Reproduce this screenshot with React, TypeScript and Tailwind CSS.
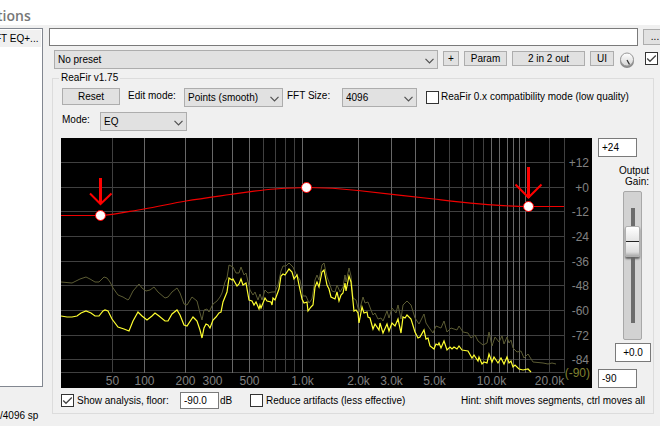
import { useId, type ReactNode } from "react";

const FREQS = [
  { x: 51.5, label: "50" },
  { x: 83.5, label: "100", major: true },
  { x: 124.5, label: "200", major: true },
  { x: 151.5, label: "300", major: true },
  { x: 171.5, major: true },
  { x: 188.5, label: "500", major: true },
  { x: 202.5 },
  { x: 214.5 },
  { x: 224.5 },
  { x: 233.5 },
  { x: 241.5, label: "1.0k", major: true },
  { x: 297.5, label: "2.0k", major: true },
  { x: 330.5, label: "3.0k", major: true },
  { x: 354.5, major: true },
  { x: 373.5, label: "5.0k", major: true },
  { x: 388.5 },
  { x: 401.5 },
  { x: 412.5 },
  { x: 422.5 },
  { x: 430.5, label: "10.0k", major: true },
  { x: 438.5, major: true },
  { x: 446.5, major: true },
  { x: 452.5, major: true },
  { x: 458.5, major: true },
  { x: 464.5, major: true },
  { x: 488.5, label: "20.0k" },
  { x: 503.5 },
];

const LEVELS = [
  { y: 24.5, label: "+12" },
  { y: 49.5, label: "+0" },
  { y: 73.5, label: "-12" },
  { y: 98.5, label: "-24" },
  { y: 123.5, label: "-36" },
  { y: 147.5, label: "-48" },
  { y: 172.5, label: "-60" },
  { y: 197.5, label: "-72" },
  { y: 221.5, label: "-84" },
  { y: 234.5, label: "(-90)" },
];

const CURVE =
  "M0 77.5H42C55 76.5 70 73 83 71S110 65.5 125 63S155 58.5 169 56.5S200 52 214 51S235 49.5 246 49.5S280 50.5 297 52.5S355 59 373 61S435 68.5 467 68.5H503";

const POINTS = [
  [39.5, 77.5],
  [245.5, 49.5],
  [467.5, 68.5],
];

const SPECTRUM =
  "0,178 6,179 11,179 16,178 20,175 25,173 30,175 34,178 38,178 42,173 44,172 47,173 51,181 57,189 63,191 68,193 72,183 77,174 81,178 86,182 91,178 94,175 98,178 104,183 107,183 111,176 116,172 119,177 123,187 126,188 132,179 134,181 136,183 139,192 141,200 143,190 145,186 147,187 149,190 152,182 155,179 158,175 160,174 162,164 166,154 168,140 171,142 172,141 176,148 178,146 180,141 182,147 185,145 188,162 191,163 193,167 195,164 198,171 199,167 200,170 204,160 206,163 210,164 211,167 212,160 214,162 218,151 220,138 222,136 224,137 228,131 231,134 233,141 236,137 238,147 241,161 243,165 246,164 247,173 250,169 252,167 254,149 256,144 258,149 261,134 263,132 266,147 268,151 270,159 274,161 276,154 278,163 280,157 282,155 284,145 285,153 288,138 290,144 293,173 295,172 297,175 298,185 301,169 303,175 306,174 307,179 309,180 312,191 314,186 318,192 319,185 322,195 326,186 328,193 331,185 334,188 337,181 340,195 342,179 344,180 346,177 350,181 354,194 357,200 359,199 363,192 365,201 367,200 369,208 373,211 375,206 377,207 378,205 380,210 383,203 386,212 389,209 391,211 393,209 396,211 398,208 401,212 407,213 411,220 413,217 417,223 418,219 421,226 423,224 426,225 428,216 431,224 433,219 437,225 440,220 443,226 446,219 448,225 450,223 452,229 454,227 458,231 462,232 467,231 470,234";

const PEAKS =
  "0,144 11,145 19,141 25,139 29,141 34,144 38,144 43,139 46,140 49,144 52,150 57,157 62,159 67,162 68,161 72,153 78,146 81,150 85,153 89,152 93,149 97,154 104,160 107,159 111,154 116,150 119,155 123,166 126,167 131,159 136,163 139,175 141,182 143,172 146,171 148,174 152,166 156,163 159,159 161,155 164,144 166,140 168,127 172,129 175,135 178,135 180,129 183,137 185,135 189,152 192,157 194,154 197,162 199,156 201,162 204,152 207,155 211,154 214,154 217,147 220,133 222,128 225,128 228,125 232,129 235,136 239,142 242,158 245,158 248,165 251,161 254,142 256,137 258,142 261,127 263,125 266,139 268,144 271,153 274,154 276,147 279,154 282,149 284,137 285,144 288,130 290,138 292,160 295,162 298,174 302,159 304,165 307,164 310,172 312,177 314,175 317,181 320,180 322,183 326,173 328,180 331,170 335,175 337,167 340,181 342,167 344,165 346,163 350,167 354,180 358,186 363,176 365,185 369,191 372,195 375,188 380,190 383,183 386,194 390,190 396,192 398,188 402,194 407,195 410,200 414,197 417,203 422,207 426,205 428,194 431,208 434,199 438,204 441,198 443,206 446,199 448,205 450,202 452,210 456,214 460,213 463,220 467,216 472,224 482,225 487,226 491,225 495,226";

function Button({ className, children }: { className: string; children: ReactNode }) {
  return (
    <button
      type="button"
      className={`shrink-0 flex items-center justify-center border border-[#adadad] bg-[#e1e1e1] ${className}`}
    >
      {children}
    </button>
  );
}

function Select({
  id,
  label,
  value,
  className,
}: {
  id: string;
  label?: string;
  value: string;
  className: string;
}) {
  return (
    <div className={`relative h-[19px] ${className}`}>
      <select
        id={id}
        aria-label={label}
        defaultValue={value}
        className="block h-full w-full appearance-none border border-[#adadad] bg-[#e1e1e1] pl-[3px] leading-4"
      >
        <option>{value}</option>
      </select>
      <svg
        viewBox="0 0 9 6"
        className="pointer-events-none absolute right-1 top-2 h-[6px] w-[9px]"
        fill="none"
        stroke="#505050"
        strokeWidth="1.2"
      >
        <path d="M.5 .8 4.5 4.8 8.5 .8" />
      </svg>
    </div>
  );
}

function Checkbox({
  id,
  label,
  checked,
}: {
  id: string;
  label?: string;
  checked?: boolean;
}) {
  return (
    <span className="relative block size-[13px] shrink-0">
      <input
        id={id}
        type="checkbox"
        aria-label={label}
        defaultChecked={checked}
        className="peer block size-full appearance-none border border-[#333] bg-white"
      />
      <svg
        viewBox="0 0 13 13"
        className="pointer-events-none absolute inset-0 hidden peer-checked:block"
        fill="none"
        stroke="#444"
        strokeWidth="1.3"
      >
        <path d="M2.2 6.5 5 9.3 10.8 3.5" />
      </svg>
    </span>
  );
}

function TextBox({ label, value, className }: { label: string; value: string; className: string }) {
  return (
    <input
      type="text"
      aria-label={label}
      defaultValue={value}
      className={`block border border-[#7a7a7a] bg-white px-[3px] leading-3 ${className}`}
    />
  );
}

function Knob() {
  const id = useId();
  return (
    <svg viewBox="0 0 16 17" className="h-[17px] w-4 shrink-0">
      <defs>
        <linearGradient id={id} x1="0" y1="0" x2="0" y2="1">
          <stop offset="0" stopColor="#fff" />
          <stop offset="1" stopColor="#d4d4d4" />
        </linearGradient>
      </defs>
      <circle cx="8" cy="9" r="7" fill="#8a8a8a" />
      <circle cx="8" cy="7.5" r="6.5" fill={`url(#${id})`} stroke="#999" />
      <path d="M8 8 10.5 12.5" stroke="#333" strokeWidth="1.3" />
    </svg>
  );
}

function Graph() {
  return (
    <svg
      viewBox="0 0 531 250"
      className="block h-auto min-w-0 flex-1 bg-black font-['Liberation_Sans',sans-serif] text-[12px]"
      role="img"
      aria-label="Frequency response"
    >
      {LEVELS.map((l) => (
        <path key={l.y} d={`M0 ${l.y}H503`} stroke="#404040" />
      ))}
      {FREQS.map((f) => (
        <path key={f.x} d={`M${f.x} 0V235`} stroke={f.major ? "#686868" : "#404040"} />
      ))}
      {LEVELS.map((l) => (
        <text
          key={l.y}
          x={l.label === "(-90)" ? 529 : 528}
          y={l.y + 4.5}
          textAnchor="end"
          fill={l.label === "(-90)" ? "#808030" : "#808080"}
        >
          {l.label}
        </text>
      ))}
      {FREQS.filter((f) => f.label).map((f) => (
        <text key={f.x} x={f.x} y="247" textAnchor="middle" fill="#808080">
          {f.label}
        </text>
      ))}
      <polyline points={PEAKS} fill="none" stroke="#5c5c34" />
      <polyline points={SPECTRUM} fill="none" stroke="#ffff30" strokeWidth="1.2" />
      <path d={CURVE} fill="none" stroke="#f00000" strokeWidth="1.2" />
      {POINTS.map(([x, y]) => (
        <circle key={x} cx={x} cy={y} r="5" fill="#fff" stroke="#f00" />
      ))}
      <g fill="none" stroke="#f00" strokeWidth="2">
        <path d="M39.5 40V66" strokeWidth="3" />
        <path d="M29 55.5 39.5 66 50.5 55.5" />
        <path d="M467.5 29V60" strokeWidth="3" />
        <path d="M454.5 46.5 467.5 59.5 480.5 46.5" />
      </g>
    </svg>
  );
}

export default function App() {
  return (
    <div className="min-h-screen overflow-hidden bg-[#f0f0f0] font-['Liberation_Sans',sans-serif] text-[10px] leading-[14px] text-black">
      <header className="h-[25px] bg-white">
        <h1 className="-ml-[3px] pt-[6px] font-['Open_Sans',sans-serif] text-[14px] leading-5 font-semibold text-[#777]">
          tions
        </h1>
      </header>

      <div className="flex pt-[3px]">
        <aside className="w-[43px] shrink-0">
          <ul className="h-[359px] border border-l-0 border-[#828790] bg-white pt-px pr-px">
            <li className="h-[17px] bg-[#f0f0f0] -indent-[5px] leading-[17px] whitespace-nowrap">
              FT EQ+...
            </li>
          </ul>
          <p className="mt-[22px] whitespace-nowrap">/4096 sp</p>
        </aside>

        <main className="min-w-0 flex-1 pl-[6px]">
          <div className="flex gap-[5px]">
            <TextBox label="Comment" value="" className="h-[18px] min-w-0 flex-1" />
            <Button className="mt-px -mr-[7px] h-4 w-6">...</Button>
          </div>

          <div className="mt-1 flex items-start gap-[5px] pr-[2px] pl-[5px]">
            <Select id="preset" label="Preset" value="No preset" className="min-w-0 flex-1" />
            <Button className="mt-px h-[15px] w-4">+</Button>
            <Button className="mt-px h-[15px] w-[43px]">Param</Button>
            <Button className="mt-px h-[15px] w-[73px]">2 in 2 out</Button>
            <Button className="mt-px h-[15px] w-6">UI</Button>
            <div className="mt-[2px] flex gap-[10px]">
              <Knob />
              <Checkbox id="enabled" label="Enabled" checked />
            </div>
          </div>

          <fieldset className="mt-[2px] mr-[6px] ml-[3px] min-w-0 border border-[#dcdcdc] pt-[3px] pr-1 pb-1 pl-2">
            <legend className="-ml-[2px] px-[2px]">ReaFir v1.75</legend>

            <div className="flex items-start">
              <Button className="ml-px h-[17px] w-[58px]">Reset</Button>
              <label htmlFor="edit-mode" className="w-16 shrink-0 pt-px pl-2 whitespace-nowrap">
                Edit mode:
              </label>
              <Select id="edit-mode" value="Points (smooth)" className="w-[99px]" />
              <label htmlFor="fft-size" className="w-[59px] shrink-0 pt-px pl-1 whitespace-nowrap">
                FFT Size:
              </label>
              <Select id="fft-size" value="4096" className="w-[75px]" />
              <div className="mt-[2px] ml-[9px] flex items-center gap-[2px] whitespace-nowrap">
                <Checkbox id="compat" />
                <label htmlFor="compat">ReaFir 0.x compatibility mode (low quality)</label>
              </div>
            </div>

            <div className="mt-[5px] flex items-start">
              <label htmlFor="mode" className="w-[39px] pt-px pl-px">
                Mode:
              </label>
              <Select id="mode" value="EQ" className="w-[87px]" />
            </div>

            <div className="mt-[7px] flex gap-[6px]">
              <Graph />
              <div className="flex w-[51px] shrink-0 flex-col">
                <TextBox label="Top of range" value="+24" className="h-[19px] w-[39px]" />
                <label htmlFor="gain" className="mt-2 text-right leading-[11px]">
                  Output
                  <br />
                  Gain:
                </label>
                <input
                  id="gain"
                  type="range"
                  min="0"
                  max="100"
                  defaultValue="71"
                  className="mt-1 ml-[25px] h-[149px] w-[19px] appearance-none rounded-[2px] border border-[#a8a8a8] bg-[#d2d2d2] bg-[linear-gradient(#6c6c6c,#6c6c6c)] bg-[length:4px_115px] bg-center bg-no-repeat [direction:rtl] [writing-mode:vertical-lr] [&::-webkit-slider-thumb]:h-[31px] [&::-webkit-slider-thumb]:w-[15px] [&::-webkit-slider-thumb]:appearance-none [&::-webkit-slider-thumb]:rounded-[2px] [&::-webkit-slider-thumb]:border [&::-webkit-slider-thumb]:border-[#b0b0b0] [&::-webkit-slider-thumb]:bg-[linear-gradient(#fff_0,#e4e4e4_14px,#222_14px,#222_15px,#f4f4f4_15px,#ddd_25px,#aaa_29px)] [&::-webkit-slider-thumb]:shadow-[0_2px_2px_#666]"
                />
                <TextBox label="Gain value" value="+0.0" className="mt-[3px] ml-[17px] h-[19px] w-[36px] text-center" />
                <TextBox label="Bottom of range" value="-90" className="mt-[7px] h-[19px] w-[39px]" />
              </div>
            </div>

            <div className="mt-1 flex items-center whitespace-nowrap">
              <Checkbox id="analysis" checked />
              <label htmlFor="analysis" className="w-[106px] shrink-0 pl-[3px]">
                Show analysis, floor:
              </label>
              <TextBox label="Floor in dB" value="-90.0" className="h-[17px] w-[39px]" />
              <span className="w-[31px] pl-px">dB</span>
              <Checkbox id="artifacts" />
              <label htmlFor="artifacts" className="pl-[3px]">
                Reduce artifacts (less effective)
              </label>
              <p className="ml-auto pr-1">Hint: shift moves segments, ctrl moves all</p>
            </div>
          </fieldset>
        </main>
      </div>
    </div>
  );
}
